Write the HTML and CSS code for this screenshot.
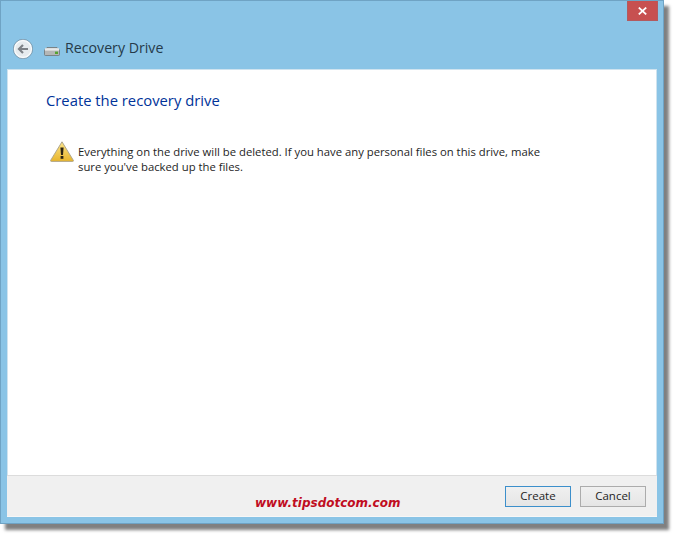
FILE: index.html
```
<!DOCTYPE html>
<html lang="en">
<head>
<meta charset="utf-8">
<title>Recovery Drive</title>
<link rel="stylesheet" href="styles.css">
</head>
<body>
<div class="window">
  <header class="titlebar">
    <div class="close-row">
      <div class="close"><svg width="9" height="8" viewBox="0 0 9 8"><path d="M.8 .6L8.2 7.4M8.2 .6L.8 7.4" stroke="#fff" stroke-width="1.8" fill="none"/></svg></div>
    </div>
    <div class="nav-row">
      <svg class="back" width="20" height="20" viewBox="0 0 20 20"><circle cx="10" cy="10" r="8.6" fill="#e6ebee" stroke="#f8fafb" stroke-width="1.6"/><circle cx="10" cy="10" r="9.7" fill="none" stroke="#71828e" stroke-width=".6"/><path d="M15 10H6.8M10 6L6 10L10 14" fill="none" stroke="#7c8186" stroke-width="2.2"/></svg>
      <svg class="drive" width="16" height="9" viewBox="0 0 16 9"><path d="M3 .5H13L15.5 3.2V7.5Q15.5 8.5 14.5 8.5H1.5Q.5 8.5 .5 7.5V3.2Z" fill="#b4b6b6" stroke="#6f7476" stroke-width=".8"/><rect x="1" y="1.2" width="14" height="2.4" fill="#e8e9e9"/><rect x="11" y="4.6" width="3" height="2.4" fill="#55a330"/></svg>
      <span class="app-title">Recovery Drive</span>
    </div>
  </header>
  <main class="content">
    <h1 class="heading">Create the recovery drive</h1>
    <div class="warning">
      <svg class="warn-icon" width="24" height="21" viewBox="0 0 24 21"><defs><linearGradient id="w" x1="0" y1="0" x2="0" y2="1"><stop offset="0" stop-color="#fbe48a"/><stop offset="1" stop-color="#e8b52b"/></linearGradient></defs><path d="M12 .8L23.4 19.4Q23.6 20.4 22.6 20.4H1.4Q.4 20.4 .6 19.4Z" fill="url(#w)" stroke="#a8a08a" stroke-width=".9"/><path d="M10.4 6.5H13.6L13 14H11Z" fill="#2b2415"/><rect x="10.6" y="15" width="2.8" height="2.8" fill="#2b2415"/></svg>
      <p class="warn-text">Everything on the drive will be deleted. If you have any personal files on this drive, make sure you've backed up the files.</p>
    </div>
  </main>
  <footer class="footer">
    <span class="watermark">www.tipsdotcom.com</span>
    <button class="btn btn-primary">Create</button>
    <button class="btn">Cancel</button>
  </footer>
</div>
</body>
</html>
```
FILE: styles.css
```
* { box-sizing: border-box; }
html, body { margin: 0; height: 100%; background: #fff; overflow: hidden; }
body { font-family: "Open Sans", "Noto Sans", sans-serif; color: #1e1e1e; }
.window {
  width: 664px; height: 524px;
  background: #8ac4e6;
  border: 1px solid #6fa3c4;
  padding: 0 6px 6px 6px;
  display: flex; flex-direction: column;
  box-shadow: 5px 6px 3px rgba(60,60,60,.65);
}
.titlebar { height: 68px; flex: none; display: flex; flex-direction: column; }
.close-row { display: flex; justify-content: flex-end; height: 21px; margin-right: -1px; }
.close { width: 31px; height: 20px; background: #c75050; border: 1px solid #b25a5f; border-top: 0; display: flex; align-items: center; justify-content: center; }
.nav-row { display: flex; align-items: center; height: 47px; padding: 7px 0 0 6px; }
.back { flex: none; }
.drive { flex: none; margin: 5px 5px 0 11px; }
.app-title { font-size: 14.2px; line-height: 20px; margin-top: -2px; color: #253a49; }
.content { flex: 1; background: #fff; border: 1px solid #cfe3ef; border-bottom: 0; padding: 20px 38px 0; min-height: 0; }
.heading { margin: 0 0 34px; font-size: 14.8px; font-weight: 400; color: #003399; line-height: 20px; }
.warning { display: flex; align-items: flex-start; gap: 4px; padding-left: 4px; }
.warn-icon { flex: none; margin-top: -3px; }
.warn-text { margin: 0; width: 476px; font-size: 11.3px; line-height: 15px; color: #1e1e1e; }
.footer { height: 42px; flex: none; background: #f0f0f0; border-top: 1px solid #dcdcdc; border-bottom: 1px solid #f7f7f7; display: flex; align-items: center; justify-content: flex-end; gap: 9px; padding: 0 11px 0 0; position: relative; }
.watermark { position: absolute; left: 248px; top: 19px; font: italic 700 12px/16px "DejaVu Sans", sans-serif; color: #c00d1f; }
.btn { width: 66px; height: 21px; padding: 0; font: 11.5px/1 "Open Sans", "Noto Sans", sans-serif; color: #1e1e1e; background: linear-gradient(#f0f0f0, #e5e5e5); border: 1px solid #acacac; margin: 0; }
.btn-primary { border-color: #3c8fcb; }
```
